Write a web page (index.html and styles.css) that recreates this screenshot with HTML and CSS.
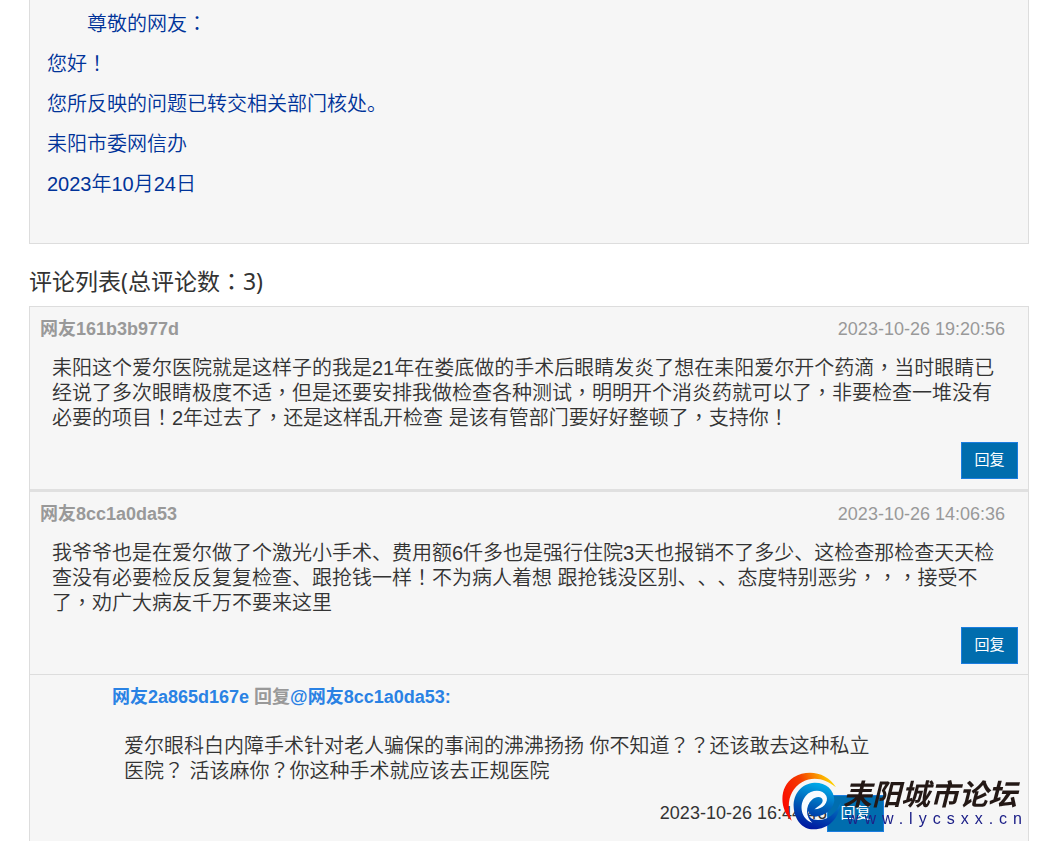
FILE: index.html
```html
<!DOCTYPE html>
<html lang="zh-CN">
<head>
    <meta charset="UTF-8">
    <meta name="viewport" content="width=device-width, initial-scale=1.0">
    <title>评论列表</title>
    <link rel="stylesheet" href="styles.css">
</head>
<body>
    <main class="container">
        <div class="answer">
            <p class="indent">尊敬的网友<span class="p" lang="zh-TW">：</span></p>
            <p>您好<span class="p" lang="zh-TW">！</span></p>
            <p>您所反映的问题已转交相关部门核处。</p>
            <p>耒阳市委网信办</p>
            <p>2023年10月24日</p>
        </div>

        <h2>评论列表(总评论数<span class="p" lang="zh-TW">：</span>3)</h2>

        <div class="comments">
            <article class="comment">
                <header class="comment-head">
                    <strong>网友161b3b977d</strong>
                    <time>2023-10-26 19:20:56</time>
                </header>
                <p class="comment-text">耒阳这个爱尔医院就是这样子的我是21年在娄底做的手术后眼睛发炎了想在耒阳爱尔开个药滴<span class="p" lang="zh-TW">，</span>当时眼睛已经说了多次眼睛极度不适<span class="p" lang="zh-TW">，</span>但是还要安排我做检查各种测试<span class="p" lang="zh-TW">，</span>明明开个消炎药就可以了<span class="p" lang="zh-TW">，</span>非要检查一堆没有必要的项目<span class="p" lang="zh-TW">！</span>2年过去了<span class="p" lang="zh-TW">，</span>还是这样乱开检查 是该有管部门要好好整顿了<span class="p" lang="zh-TW">，</span>支持你<span class="p" lang="zh-TW">！</span></p>
                <div class="comment-foot">
                    <button type="button">回复</button>
                </div>
            </article>

            <article class="comment">
                <header class="comment-head">
                    <strong>网友8cc1a0da53</strong>
                    <time>2023-10-26 14:06:36</time>
                </header>
                <p class="comment-text">我爷爷也是在爱尔做了个激光小手术、费用额6仟多也是强行住院3天也报销不了多少、这检查那检查天天检查没有必要检反反复复检查、跟抢钱一样<span class="p" lang="zh-TW">！</span>不为病人着想 跟抢钱没区别、、、态度特别恶劣<span class="p" lang="zh-TW">，，，</span>接受不了<span class="p" lang="zh-TW">，</span>劝广大病友千万不要来这里</p>
                <div class="comment-foot">
                    <button type="button">回复</button>
                </div>
            </article>

            <article class="reply">
                <header class="reply-head">
                    <a href="#">网友2a865d167e</a> 回复<a href="#">@网友8cc1a0da53:</a>
                </header>
                <p class="reply-text">爱尔眼科白内障手术针对老人骗保的事闹的沸沸扬扬 你不知道<span class="p" lang="zh-TW">？？</span>还该敢去这种私立医院<span class="p" lang="zh-TW">？</span> 活该麻你<span class="p" lang="zh-TW">？</span>你这种手术就应该去正规医院</p>
                <div class="reply-foot">
                    <time>2023-10-26 16:44:46</time>
                    <button type="button">回复</button>
                </div>
            </article>
        </div>
    </main>

    <div class="watermark">
        <svg width="64" height="62" viewBox="0 0 192 186" aria-hidden="true">
            <defs>
                <linearGradient id="flame" x1="0" y1="0.6" x2="1" y2="0.2">
                    <stop offset="0" stop-color="#fa0a00"/>
                    <stop offset="0.45" stop-color="#f43c00"/>
                    <stop offset="1" stop-color="#ffe100"/>
                </linearGradient>
                <linearGradient id="wave" x1="0.7" y1="0" x2="0.4" y2="1">
                    <stop offset="0" stop-color="#00b4f0"/>
                    <stop offset="0.5" stop-color="#0062b8"/>
                    <stop offset="1" stop-color="#0018a0"/>
                </linearGradient>
            </defs>
            <path fill="url(#flame)" d="M38 152C0 116 0 50 44 22C88-4 144 8 171 52C140 26 102 18 70 36C30 58 20 106 38 152Z"/>
            <path fill="url(#wave)" d="M166 92C166 58 140 37 106 38C68 40 42 72 44 110C46 150 72 179 104 178C150 177 180 145 185 98C168 134 144 151 116 150C96 149 86 138 88 122C91 136 104 142 121 138C146 131 162 114 166 92Z"/>
            <path fill="#f8fcff" d="M100 158C66 148 58 104 80 78C98 57 132 58 142 78C150 96 132 118 106 118C112 112 130 104 131 92C131 79 112 77 99 89C78 108 80 142 100 158Z"/>
        </svg>
        <div class="watermark-text">
            <span class="site-name">耒阳城市论坛</span>
            <span class="site-url">www.lycsxx.cn</span>
        </div>
    </div>
</body>
</html>
```
FILE: styles.css
```css
* {
    box-sizing: border-box;
}
body {
    margin: 0;
    background: #fff;
    color: #333;
    font-family: "Liberation Sans", "Noto Sans CJK SC", sans-serif;
    font-size: 20px;
    font-weight: 350;
    text-spacing-trim: space-all;
}
p {
    margin: 0;
}
.container {
    margin: 0 11px 0 29px;
}

/* full-width marks sit in the middle of their box */
.p {
    font-family: "Noto Sans CJK TC", sans-serif;
    line-height: 1;
}

.answer {
    padding: 4px 17px 39px;
    background: #f6f6f6;
    border: 1px solid #ddd;
    border-top: 0;
    color: #039;
    line-height: 40px;
}
.indent {
    text-indent: 2em;
}
h2 {
    margin: 22px 0 10px;
    font-family: "Noto Sans", "Noto Sans CJK SC", sans-serif;
    font-size: 23px;
    font-weight: 400;
    line-height: 30px;
}

.comments {
    background: #f6f6f6;
    border: 1px solid #ddd;
}
.comment {
    padding: 10px;
}
.comment + .comment {
    border-top: 3px solid #e0e0e0;
}
.comment-head {
    display: flex;
    justify-content: space-between;
    padding-right: 13px;
    color: #999;
    font-size: 18px;
    line-height: 24px;
}
.comment-head strong {
    font-weight: bold;
}
.comment-text {
    padding: 15px 12px 11px;
    line-height: 25px;
}
.comment-foot {
    display: flex;
    justify-content: flex-end;
}
button {
    width: 57px;
    height: 37px;
    padding: 0 0 4px;
    background: #006dae;
    border: 1px solid #1b7de0;
    color: #fff;
    font-family: inherit;
    font-size: 15px;
    cursor: pointer;
}

.reply {
    padding: 10px 144px 10px 82px;
    border-top: 1px solid #ddd;
}
.reply-head {
    color: #999;
    font-size: 18px;
    font-weight: bold;
    line-height: 24px;
}
.reply-head a {
    color: #2a82e4;
    text-decoration: none;
}
.reply-text {
    padding: 25px 0 11px 12px;
    line-height: 25px;
}
.reply-foot {
    display: flex;
    justify-content: flex-end;
    align-items: center;
    font-size: 18px;
}

.watermark {
    position: fixed;
    right: 12px;
    bottom: 9px;
    display: flex;
    pointer-events: none;
}
.watermark-text {
    display: flex;
    flex-direction: column;
    padding-top: 10px;
}
.site-name {
    color: #231815;
    font-size: 29px;
    font-style: italic;
    font-weight: 700;
    line-height: 31px;
}
.site-url {
    padding-left: 4px;
    color: #1d2088;
    font-size: 16px;
    letter-spacing: 6px;
    line-height: 16px;
}
```
